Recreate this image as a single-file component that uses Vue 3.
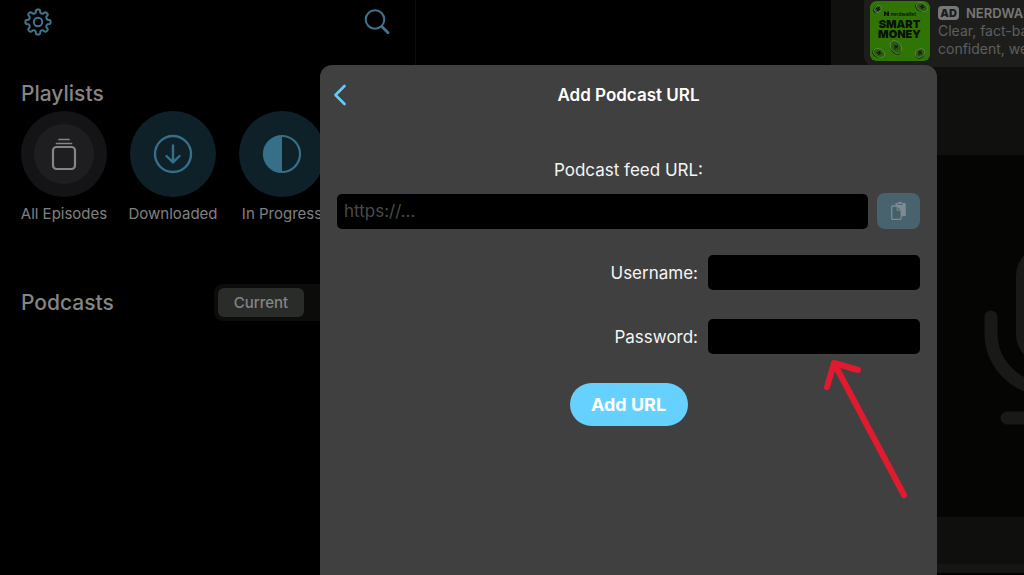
<script setup>
import { ref } from 'vue'

const feedUrl = ref('')
const username = ref('')
const password = ref('')

// Outline of the eight-tooth settings gear, sampled in polar coordinates.
const gearPath = (() => {
  const steps = 192
  const points = []
  for (let i = 0; i < steps; i++) {
    const a = (i / steps) * Math.PI * 2
    const r = 10.9 + 1.7 * Math.tanh(2.4 * Math.cos(8 * a))
    points.push(`${(14 + r * Math.cos(a)).toFixed(2)} ${(14 + r * Math.sin(a)).toFixed(2)}`)
  }
  return `M${points.join('L')}Z`
})()

const coins = [
  { x: 8, y: 8, rx: 3, ry: 4, a: 35 },
  { x: 52, y: 6, rx: 6, ry: 4, a: 30 },
  { x: 26, y: 46, rx: 5, ry: 7, a: -35 },
  { x: 9, y: 52, rx: 6, ry: 4, a: 28 },
  { x: 50, y: 52, rx: 5, ry: 4, a: -38 }
]
</script>

<template>
  <div class="app">
    <aside class="sidebar">
      <header class="toolbar">
        <button class="icon-btn" type="button" aria-label="Settings">
          <svg width="28" height="28" viewBox="0 0 28 28" fill="none" stroke="currentColor" stroke-width="2">
            <path :d="gearPath" stroke-linejoin="round" />
            <circle cx="14" cy="14" r="4.2" />
          </svg>
        </button>
        <button class="icon-btn" type="button" aria-label="Search">
          <svg width="28" height="28" viewBox="0 0 28 28" fill="none" stroke="currentColor" stroke-linecap="round">
            <circle cx="12" cy="11.5" r="9.3" stroke-width="2" />
            <path d="M18.8 18.6 25 24.8" stroke-width="2.8" />
          </svg>
        </button>
      </header>

      <h2>Playlists</h2>
      <div class="playlists">
        <a class="playlist" href="#all">
          <span class="disc all">
            <svg width="60" height="60" viewBox="0 0 60 60" fill="none" stroke="currentColor" stroke-linecap="round">
              <rect x="19" y="23" width="22" height="22" rx="3.5" stroke-width="2.2" />
              <path d="M22.500 19.500h15M25 15.500h10" stroke-width="1.700" />
            </svg>
          </span>
          <span>All Episodes</span>
        </a>
        <a class="playlist" href="#downloaded">
          <span class="disc">
            <svg width="40" height="40" viewBox="0 0 40 40" fill="none" stroke="currentColor" stroke-width="2.4" stroke-linecap="round" stroke-linejoin="round">
              <circle cx="20" cy="20" r="18" />
              <path d="M20 11.5V28M13.500 22 20 28.300 26.500 22" />
            </svg>
          </span>
          <span>Downloaded</span>
        </a>
        <a class="playlist" href="#progress">
          <span class="disc">
            <svg width="40" height="40" viewBox="0 0 40 40">
              <circle cx="20" cy="20" r="18" fill="none" stroke="currentColor" stroke-width="2.2" />
              <path d="M20 2a18 18 0 0 0 0 36Z" fill="currentColor" />
            </svg>
          </span>
          <span>In Progress</span>
        </a>
      </div>

      <div class="podcasts">
        <h2>Podcasts</h2>
        <div class="segments">
          <button type="button">Current</button>
        </div>
      </div>
    </aside>

    <main class="detail">
      <section class="hero">
        <a class="ad" href="#ad">
          <svg class="cover" width="60" height="60" viewBox="0 0 60 60" role="img" aria-label="Smart Money">
            <rect width="60" height="60" rx="6" fill="#2f7404" />
            <g v-for="c in coins" :key="c.x + '-' + c.y" :transform="`translate(${c.x} ${c.y}) rotate(${c.a})`">
              <ellipse cx="-0.8" cy="1" :rx="c.rx" :ry="c.ry" fill="#0b2204" />
              <ellipse :rx="c.rx" :ry="c.ry" fill="#2b5a12" stroke="#648a4b" stroke-width="0.8" />
              <path d="M-2 1.2 0-1.6 .4 1.2 2-1.2" fill="none" stroke="#0b1a06" stroke-width="1" />
            </g>
            <path d="M14 15V10.500h1.400l2 2.400v-2.400H19V15h-1.400l-2-2.400V15Z" fill="#061003" />
            <text x="20.500" y="14.500" class="brand">nerdwallet</text>
            <text x="29.500" y="26.500" class="name">SMART</text>
            <text x="29.500" y="37" class="name">MONEY</text>
          </svg>
          <span class="ad-copy">
            <span class="ad-title"><b>AD</b>NERDWALLET</span>
            <span>Clear, fact-based</span>
            <span>confident, wealth</span>
          </span>
        </a>
      </section>
      <section class="artwork">
        <svg width="140" height="200" viewBox="0 0 140 200" fill="none" stroke="currentColor" stroke-width="13" stroke-linecap="round">
          <rect x="39" y="5" width="62" height="120" rx="31" fill="currentColor" stroke="none" />
          <path d="M14 77v16a56 56 0 0 0 112 0V77M30 178h80" />
        </svg>
      </section>
      <section class="strip"></section>
    </main>

    <section class="sheet" role="dialog" aria-labelledby="sheet-title">
      <header class="sheet-head">
        <button class="back" type="button" aria-label="Back">
          <svg width="16" height="24" viewBox="0 0 16 24" fill="none" stroke="currentColor" stroke-width="2.6" stroke-linecap="round" stroke-linejoin="round">
            <path d="M11.500 3 2.500 12 11.500 21" />
          </svg>
        </button>
        <h1 id="sheet-title">Add Podcast URL</h1>
      </header>
      <form @submit.prevent>
        <label class="feed-label" for="feed">Podcast feed URL:</label>
        <div class="feed-row">
          <input id="feed" v-model="feedUrl" type="text" placeholder="https://..." />
          <button class="paste" type="button" aria-label="Paste">
            <svg width="18" height="20" viewBox="0 0 18 20">
              <path d="M5.500 2h2q2.500-2.400 5 0h2a1.300 1.300 0 0 1 1.300 1.300V14a1.300 1.300 0 0 1-1.300 1.300h-9Z" fill="#7d8c93" />
              <path d="M7.500 3.300h5" stroke="#48606a" />
              <path d="M3 5h4.500l3.700 3.700V17a1.300 1.300 0 0 1-1.300 1.300H3A1.300 1.300 0 0 1 1.700 17V6.300A1.300 1.300 0 0 1 3 5Z" fill="#465f69" stroke="#7d8c93" stroke-width="1.300" />
              <path d="M7.200 5.300v3.900h3.700" fill="none" stroke="#7d8c93" />
            </svg>
          </button>
        </div>
        <div class="field">
          <label for="user">Username:</label>
          <input id="user" v-model="username" type="text" />
        </div>
        <div class="field">
          <label for="pass">Password:</label>
          <input id="pass" v-model="password" type="password" />
        </div>
        <button class="submit" type="submit">Add URL</button>
      </form>
      <svg class="arrow" width="88" height="144" viewBox="0 0 88 144" fill="none" stroke="#e01b2f" stroke-width="6" stroke-linecap="round" stroke-linejoin="round" aria-hidden="true">
        <path d="M82 138 12 6M5 30 12 6 36 13" />
      </svg>
    </section>
  </div>
</template>

<style>
body {
  margin: 0;
  background: #000;
}
</style>

<style scoped>
.app {
  position: relative;
  display: grid;
  grid-template-columns: 416px 1fr 193px;
  min-height: 100vh;
  overflow: hidden;
  background: #000;
  color: #858585;
  font-family: Inter, "Liberation Sans", sans-serif;
  box-sizing: border-box;
}
.app * {
  box-sizing: border-box;
}
button,
input {
  font: inherit;
  border: 0;
  padding: 0;
  margin: 0;
}
a {
  color: inherit;
  text-decoration: none;
}
svg {
  display: block;
  flex: none;
}
h1,
h2 {
  margin: 0;
}
h2 {
  font-size: 21px;
  line-height: 28px;
  font-weight: 500;
  color: #858585;
}

.sidebar {
  min-width: 0;
  padding: 0 24px 0 21px;
  border-right: 1px solid #0c0e0d;
}
.toolbar {
  display: flex;
  justify-content: space-between;
  align-items: center;
  height: 44px;
  padding: 0 0 0 3px;
  margin-bottom: 36px;
}
.icon-btn {
  background: none;
  color: #41758d;
}
.playlists {
  display: flex;
  gap: 23px;
  margin-top: 3px;
}
.playlist {
  display: flex;
  flex-direction: column;
  align-items: center;
  width: 86px;
  flex: none;
  gap: 7px;
  font-size: 15px;
  line-height: 20px;
  white-space: nowrap;
  color: #808080;
}
.disc {
  display: grid;
  place-items: center;
  width: 86px;
  height: 86px;
  border-radius: 50%;
  background: #0e2028;
  color: #366f88;
}
.disc.all {
  background: #141417;
  color: #858588;
}
.disc.all svg {
  border-radius: 50%;
  background: #1e1e21;
}
.podcasts {
  display: flex;
  align-items: center;
  justify-content: space-between;
  margin-top: 60px;
}
.segments {
  width: 177px;
  padding: 4px;
  border-radius: 9px;
  background: #0c0d0b;
}
.segments button {
  width: 86px;
  height: 29px;
  border-radius: 6px;
  background: #2a2c2a;
  color: #858585;
  font-size: 15px;
  line-height: 20px;
  font-weight: 500;
}

.detail {
  grid-column: 3;
  display: flex;
  flex-direction: column;
  min-width: 0;
  overflow: hidden;
}
.hero {
  height: 155px;
  background: #10110e;
  padding-left: 33px;
}
.ad {
  display: flex;
  gap: 8px;
  height: 67px;
  padding: 1px 0 0 6px;
  border-radius: 0 0 0 12px;
  background: #1d1e1c;
  overflow: hidden;
}
.cover {
  border-radius: 6px;
}
.brand {
  font: 600 5px Inter, sans-serif;
  fill: #061003;
}
.name {
  font: 900 11px Inter, sans-serif;
  fill: #061003;
  text-anchor: middle;
}
.ad-copy {
  display: flex;
  flex-direction: column;
  padding-top: 3px;
  font-size: 14px;
  line-height: 18px;
  white-space: nowrap;
  color: #5e5f5d;
}
.ad-title {
  display: flex;
  align-items: center;
  gap: 7px;
  font-size: 13px;
  font-weight: 600;
  color: #777876;
}
.ad-title b {
  width: 21px;
  height: 14px;
  border-radius: 4px;
  background: #777876;
  color: #1d1e1c;
  font-size: 11px;
  line-height: 14px;
  text-align: center;
}
.artwork {
  height: 362px;
  padding: 85px 0 0 146px;
  background: #050604;
  color: #191a18;
}
.strip {
  height: 56px;
  background: #0f100e;
  border-bottom: 9px solid #151614;
}

.sheet {
  position: absolute;
  top: 65px;
  right: 87px;
  bottom: 0;
  left: 320px;
  padding: 0 17px;
  border-radius: 12px 12px 0 0;
  background: #404040;
  color: #f5f5f5;
  font-size: 17px;
  line-height: 24px;
}
.sheet-head {
  display: grid;
  grid-template-columns: 16px 1fr 16px;
  align-items: center;
  height: 60px;
  margin-left: -4px;
  margin-right: -4px;
}
.back {
  background: none;
  color: #62ccfb;
}
h1 {
  text-align: center;
  font-size: 17px;
  line-height: 24px;
  font-weight: 600;
  color: #fff;
}
form {
  display: flex;
  flex-direction: column;
  padding-top: 33px;
}
.feed-label {
  align-self: center;
}
input {
  height: 35px;
  min-width: 0;
  padding: 0 7px;
  border-radius: 5px;
  background: #000;
  color: #f5f5f5;
}
input::placeholder {
  color: #4a4a4c;
  opacity: 1;
}
.feed-row {
  display: flex;
  align-items: center;
  gap: 9px;
  margin-top: 11px;
  margin-bottom: 26px;
}
.feed-row input {
  flex: 1;
}
.paste {
  display: grid;
  place-items: center;
  width: 43px;
  height: 36px;
  border-radius: 8px;
  background: #48636e;
}
.field {
  display: flex;
  justify-content: flex-end;
  align-items: center;
  gap: 10px;
  margin-bottom: 29px;
}
.field input {
  width: 212px;
}
.submit {
  align-self: center;
  width: 118px;
  height: 43px;
  border-radius: 22px;
  background: #66d1ff;
  color: #fff;
  font-size: 18px;
  font-weight: 700;
}
.arrow {
  position: absolute;
  top: 292px;
  right: 27px;
}
</style>
